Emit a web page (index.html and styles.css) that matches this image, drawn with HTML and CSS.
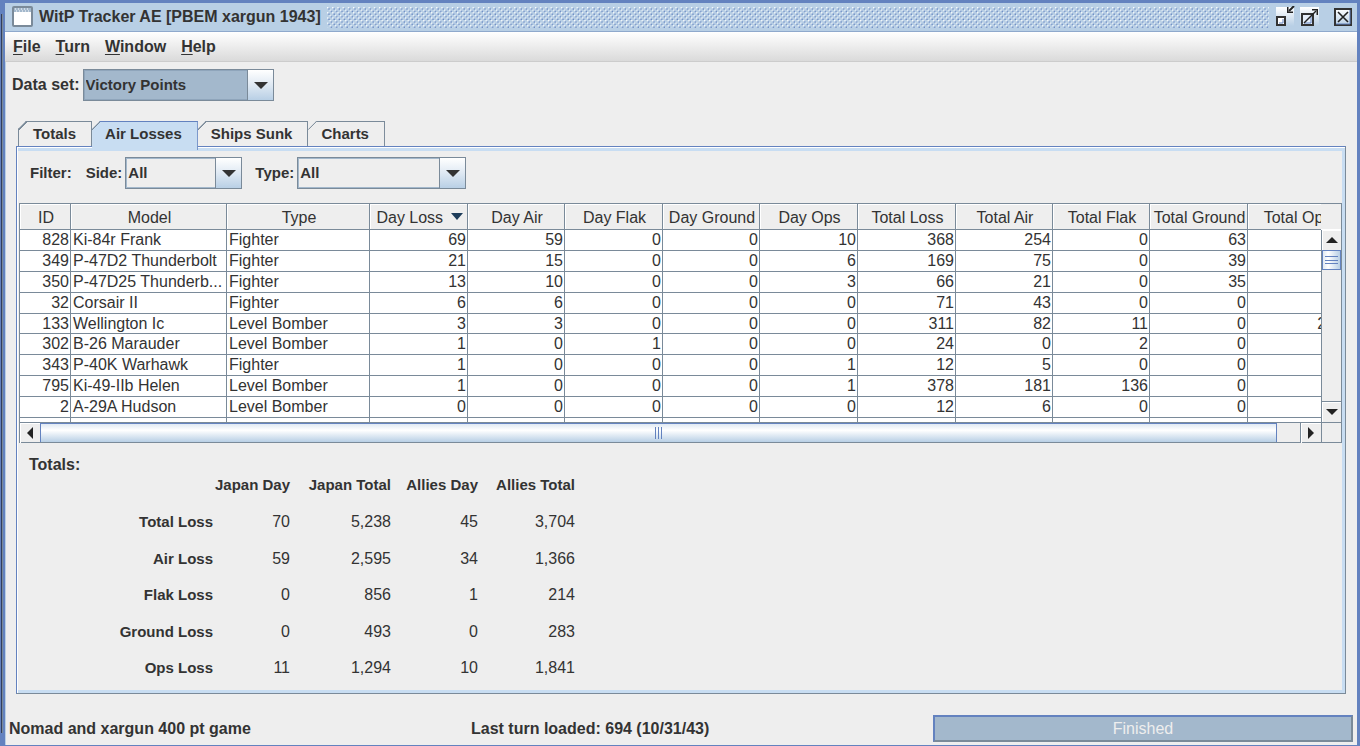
FILE: index.html
```
<!DOCTYPE html>
<html lang="en">
    <head>
        <meta charset="utf-8">
        <title>WitP Tracker AE</title>
        <link rel="stylesheet" href="styles.css">
    </head>
    <body>
        <div class="window">
            <header class="titlebar">
                <svg class="app-icon" width="22" height="22" viewBox="0 0 22 22">
                    <rect x="1" y="1" width="19" height="19" rx="1" fill="#fff" stroke="#7a8a99" stroke-width="2"/>
                    <path d="M2 2h17v4H2z" fill="#a3b8cc"/>
                    <path d="M3 3h15M4 5h15" stroke="#fff" stroke-dasharray="1 2"/>
                </svg>
                <h1>WitP Tracker AE [PBEM xargun 1943]</h1>
                <svg class="grip" height="21">
                    <defs>
                        <pattern id="bumps" width="4" height="4" patternUnits="userSpaceOnUse" patternTransform="scale(1.3)">
                            <path d="M0 0h1v1H0zM2 2h1v1H2z" fill="#fff"/>
                            <path d="M1 1h1v1H1zM3 3h1v1H3z" fill="#6382bf"/>
                        </pattern>
                    </defs>
                    <rect width="100%" height="21" fill="url(#bumps)"/>
                </svg>
                <button class="win-btn" aria-label="Minimize">
                    <svg width="20" height="22" viewBox="0 0 20 22">
                        <defs>
                            <linearGradient id="shine" x1="0" y1="0" x2="0" y2="1">
                                <stop offset="0" stop-color="#fff"/>
                                <stop offset="1" stop-color="#b8cfe5"/>
                            </linearGradient>
                        </defs>
                        <path d="M1 1h18v19H1z" fill="url(#shine)"/>
                        <rect x="2" y="11" width="8" height="8" fill="#fff" stroke="#333" stroke-width="2"/>
                        <path d="M4 17h4v-4" fill="none" stroke="#6382bf"/>
                        <path d="M19 0l-5 5" stroke="#222" stroke-width="2"/>
                        <path d="M12 1v6h6v-1.5h-4.500V1z" fill="#222"/>
                    </svg>
                </button>
                <button class="win-btn" aria-label="Maximize">
                    <svg width="20" height="22" viewBox="0 0 20 22">
                        <path d="M0 1h19v19H0z" fill="url(#shine)"/>
                        <rect x="2" y="8" width="11" height="11" fill="#e6effa" stroke="#333" stroke-width="2"/>
                        <path d="M4 17h7v-7" fill="none" stroke="#6382bf"/>
                        <path d="M4 17L16 5" stroke="#222" stroke-width="1.4"/>
                        <path d="M12 3h6v6h-1.500V4.500H12z" fill="#222"/>
                    </svg>
                </button>
                <button class="win-btn close" aria-label="Close">
                    <svg width="20" height="22" viewBox="0 0 20 22">
                        <rect x="2" y="3" width="16" height="16" fill="url(#shine)" stroke="#333" stroke-width="2"/>
                        <path d="M3 18h14V4" fill="none" stroke="#6382bf"/>
                        <path d="M5 6l10 10M15 6L5 16" stroke="#222" stroke-width="1.6"/>
                    </svg>
                </button>
            </header>

            <nav class="menubar">
                <button><u>F</u>ile</button>
                <button><u>T</u>urn</button>
                <button><u>W</u>indow</button>
                <button><u>H</u>elp</button>
            </nav>

            <div class="dataset">
                <label for="dataset">Data set:</label>
                <span class="combo focused combo-dataset">
                    <select id="dataset"><option>Victory Points</option></select>
                </span>
            </div>

            <div class="tabs" role="tablist">
                <button class="tab" role="tab">Totals</button>
                <button class="tab active" role="tab" aria-selected="true">Air Losses</button>
                <button class="tab" role="tab">Ships Sunk</button>
                <button class="tab" role="tab">Charts</button>
            </div>

            <main class="panel">
                <div class="filters">
                    <span class="filter-title">Filter:</span>
                    <label for="side">Side:</label>
                    <span class="combo combo-side">
                        <select id="side"><option>All</option></select>
                    </span>
                    <label for="type">Type:</label>
                    <span class="combo combo-type">
                        <select id="type"><option>All</option></select>
                    </span>
                </div>

                <div class="scrollpane">
                    <div class="viewport">
                        <table class="losses">
                            <colgroup>
                                <col class="c-id"><col class="c-model"><col class="c-type">
                                <col class="c-wide"><col class="c-num"><col class="c-wide"><col class="c-num"><col class="c-wide">
                                <col class="c-wide"><col class="c-num"><col class="c-num"><col class="c-wide"><col class="c-wide">
                            </colgroup>
                            <thead>
                                <tr><th>ID</th><th>Model</th><th>Type</th><th>Day Loss <svg width="12" height="7" viewBox="0 0 12 7"><path d="M0 0h12L6 7z" fill="#1d3c5a"/></svg></th><th>Day Air</th><th>Day Flak</th><th>Day Ground</th><th>Day Ops</th><th>Total Loss</th><th>Total Air</th><th>Total Flak</th><th>Total Ground</th><th>Total Ops</th></tr>
                            </thead>
                            <tbody>
                                <tr><td>828</td><td>Ki-84r Frank</td><td>Fighter</td><td>69</td><td>59</td><td>0</td><td>0</td><td>10</td><td>368</td><td>254</td><td>0</td><td>63</td><td></td></tr>
                                <tr><td>349</td><td>P-47D2 Thunderbolt</td><td>Fighter</td><td>21</td><td>15</td><td>0</td><td>0</td><td>6</td><td>169</td><td>75</td><td>0</td><td>39</td><td></td></tr>
                                <tr><td>350</td><td>P-47D25 Thunderb...</td><td>Fighter</td><td>13</td><td>10</td><td>0</td><td>0</td><td>3</td><td>66</td><td>21</td><td>0</td><td>35</td><td></td></tr>
                                <tr><td>32</td><td>Corsair II</td><td>Fighter</td><td>6</td><td>6</td><td>0</td><td>0</td><td>0</td><td>71</td><td>43</td><td>0</td><td>0</td><td></td></tr>
                                <tr><td>133</td><td>Wellington Ic</td><td>Level Bomber</td><td>3</td><td>3</td><td>0</td><td>0</td><td>0</td><td>311</td><td>82</td><td>11</td><td>0</td><td>218</td></tr>
                                <tr><td>302</td><td>B-26 Marauder</td><td>Level Bomber</td><td>1</td><td>0</td><td>1</td><td>0</td><td>0</td><td>24</td><td>0</td><td>2</td><td>0</td><td></td></tr>
                                <tr><td>343</td><td>P-40K Warhawk</td><td>Fighter</td><td>1</td><td>0</td><td>0</td><td>0</td><td>1</td><td>12</td><td>5</td><td>0</td><td>0</td><td></td></tr>
                                <tr><td>795</td><td>Ki-49-IIb Helen</td><td>Level Bomber</td><td>1</td><td>0</td><td>0</td><td>0</td><td>1</td><td>378</td><td>181</td><td>136</td><td>0</td><td></td></tr>
                                <tr><td>2</td><td>A-29A Hudson</td><td>Level Bomber</td><td>0</td><td>0</td><td>0</td><td>0</td><td>0</td><td>12</td><td>6</td><td>0</td><td>0</td><td></td></tr>
                                <tr><td></td><td></td><td></td><td></td><td></td><td></td><td></td><td></td><td></td><td></td><td></td><td></td><td></td></tr>
                            </tbody>
                        </table>
                    </div>
                    <div class="vscroll">
                        <div class="head-corner"></div>
                        <button class="arrow" aria-label="Scroll up"><svg width="12" height="6" viewBox="0 0 12 6"><path d="M0 6h12L6 0z" fill="#222"/></svg></button>
                        <div class="thumb-v"><svg width="13" height="10" viewBox="0 0 13 10"><path d="M0 1.5h13M0 5.5h13M0 8.5h13" stroke="#6382bf"/></svg></div>
                        <div class="track-v"></div>
                        <button class="arrow" aria-label="Scroll down"><svg width="12" height="6" viewBox="0 0 12 6"><path d="M0 0h12L6 6z" fill="#222"/></svg></button>
                    </div>
                    <div class="hscroll">
                        <button class="arrow" aria-label="Scroll left"><svg width="6" height="12" viewBox="0 0 6 12"><path d="M6 0v12L0 6z" fill="#222"/></svg></button>
                        <div class="thumb-h"><svg width="8" height="12" viewBox="0 0 8 12"><path d="M.5 0v12M3.5 0v12M6.5 0v12" stroke="#6382bf"/></svg></div>
                        <div class="track-h"></div>
                        <button class="arrow" aria-label="Scroll right"><svg width="6" height="12" viewBox="0 0 6 12"><path d="M0 0v12L6 6z" fill="#222"/></svg></button>
                    </div>
                    <div class="corner"></div>
                </div>

                <h2>Totals:</h2>
                <table class="totals">
                    <colgroup>
                        <col class="t-label"><col class="t-jday"><col class="t-jtotal"><col class="t-aday"><col class="t-atotal">
                    </colgroup>
                    <thead>
                        <tr><td></td><th>Japan Day</th><th>Japan Total</th><th>Allies Day</th><th>Allies Total</th></tr>
                    </thead>
                    <tbody>
                        <tr><th>Total Loss</th><td>70</td><td>5,238</td><td>45</td><td>3,704</td></tr>
                        <tr><th>Air Loss</th><td>59</td><td>2,595</td><td>34</td><td>1,366</td></tr>
                        <tr><th>Flak Loss</th><td>0</td><td>856</td><td>1</td><td>214</td></tr>
                        <tr><th>Ground Loss</th><td>0</td><td>493</td><td>0</td><td>283</td></tr>
                        <tr><th>Ops Loss</th><td>11</td><td>1,294</td><td>10</td><td>1,841</td></tr>
                    </tbody>
                </table>
            </main>

            <footer class="status">
                <span>Nomad and xargun 400 pt game</span>
                <span>Last turn loaded: 694 (10/31/43)</span>
                <div class="progress" role="progressbar" aria-valuenow="100">Finished</div>
            </footer>
        </div>
    </body>
</html>
```

FILE: styles.css
```
*{
    box-sizing:border-box;
    margin:0;
    padding:0;
}
body{
    font:bold 16px/20px "Liberation Sans", Arial, sans-serif;
    color:#333;
    background:linear-gradient(90deg, #333e5c 50%, #7a8a99 50%) 1px 14px / 2px calc(100vh - 27px) no-repeat #6382bf;
}
button, select{
    font:inherit;
    color:inherit;
    border:0;
    background:none;
}
.window{
    display:flex;
    flex-direction:column;
    min-height:100vh;
    margin-left:3px;
    border:solid #6382bf;
    border-width:3px 3px 1px 2px;
    background:#eee;
    box-shadow:inset 1px 0 #b8cfe5;
}

/* title bar */
.titlebar{
    display:flex;
    align-items:center;
    height:29px;
    padding:0 4px 0 7px;
    background:#b8cfe5;
    border-bottom:1px solid #8fa9cc;
}
.titlebar h1{
    font-size:16px;
    margin:0 6px 0 5px;
}
.grip{
    flex:1;
    min-width:0;
    margin-right:6px;
}
.win-btn{
    display:flex;
    width:20px;
    margin-right:5px;
}
.win-btn.close{
    margin:0 0 0 8px;
}

.menubar{
    display:flex;
    gap:15px;
    height:30px;
    padding:0 8px;
    background:linear-gradient(#fff, #dadada);
    border-bottom:1px solid #ccc;
}
.menubar u{
    text-underline-offset:2px;
}

/* combo boxes */
.dataset{
    display:flex;
    align-items:center;
    padding:7px 7px 0;
}
.combo{
    position:relative;
    display:flex;
    height:32px;
    border:1px solid #7a8a99;
    box-shadow:inset 0 0 0 1px #a3b8cc;
    font-size:15px;
}
.combo select{
    width:100%;
    padding:0 26px 0 2px;
    appearance:none;
}
.combo::before{
    content:"";
    position:absolute;
    top:0;
    right:0;
    bottom:0;
    width:25px;
    border-left:1px solid #7a8a99;
    background:linear-gradient(#fff, #dfe9f3 50%, #b8cfe5);
    pointer-events:none;
}
.combo::after{
    content:"";
    position:absolute;
    top:12px;
    right:5px;
    border:solid transparent;
    border-width:7px 7px 0;
    border-top-color:#333;
    pointer-events:none;
}
.combo.focused{
    background:#a3b8cc;
    box-shadow:inset 0 0 0 1px #8fa5bb;
}
.combo-dataset{
    width:191px;
    margin-left:3px;
}
.combo-side{
    width:117px;
    margin:0 13px 0 3px;
}
.combo-type{
    width:169px;
    margin-left:3px;
}

/* tabs */
.tabs{
    display:flex;
    margin:20px 13px 0;
    font-size:15px;
}
.tab{
    position:relative;
    height:25px;
    padding:0 15px 0 13px;
    border:solid #7a8a99;
    border-width:1px 1px 0 0;
    clip-path:polygon(0 8px, 8px 0, 100% 0, 100% 100%, 0 100%);
}
.tab:first-child{
    padding-left:14px;
    border-left-width:1px;
}
.tab::before{
    content:"";
    position:absolute;
    top:-1px;
    left:-1px;
    width:9px;
    height:9px;
    background:linear-gradient(135deg, transparent 44%, #7a8a99 44%, #7a8a99 56%, transparent 56%);
}
.tab.active{
    height:29px;
    margin-bottom:-4px;
    padding-bottom:4px;
    background:#c8ddf2;
    border-color:#6382bf;
    z-index:1;
}

.panel{
    flex:1;
    margin:0 11px;
    padding:10px 1px 4px 0;
    border:1px solid #7a8a99;
    border-top-color:#6382bf;
    border-left-color:#6382bf;
    box-shadow:inset 1px 1px #fff, inset -3px -3px #c8ddf2, inset 0 4px #c8ddf2;
}
.filters{
    display:flex;
    align-items:center;
    margin:0 13px 14px;
    font-size:15px;
}
.filter-title{
    margin-right:14px;
}

/* table with its scroll bars */
.scrollpane{
    display:grid;
    grid-template-columns:minmax(0, 1fr) 20px;
    grid-template-rows:218px 20px;
    margin:0 2px;
    border:1px solid #7a8a99;
}
.viewport{
    overflow:hidden;
    background:#fff;
}
.losses{
    width:1272px;
    table-layout:fixed;
    border-collapse:separate;
    border-spacing:0;
    font-weight:normal;
}
.c-id{
    width:51px;
}
.c-model{
    width:156px;
}
.c-type{
    width:143px;
}
.c-wide{
    width:98px;
}
.c-num{
    width:97px;
}
.losses th, .losses td{
    border:solid #7a8a99;
    border-width:0 1px 1px 0;
    line-height:18px;
    white-space:nowrap;
}
.losses th{
    height:26px;
    padding:3px 0 0 2px;
    font-weight:normal;
    background:#eee;
    box-shadow:inset 1px 1px #fff;
}
.losses th svg{
    margin:0 0 3px 3px;
}
.losses td{
    height:21px;
    padding:0 1px 0 2px;
    text-align:right;
}
.losses tr:nth-child(5n) td{
    height:20px;
}
.losses td:nth-child(2), .losses td:nth-child(3){
    text-align:left;
}
.vscroll, .hscroll{
    display:flex;
    background:#eee;
}
.vscroll{
    flex-direction:column;
    border-left:1px solid #7a8a99;
}
.arrow{
    display:flex;
    align-items:center;
    justify-content:center;
    flex:none;
    width:20px;
    height:20px;
    box-shadow:inset 1px 1px #fff;
}
.vscroll .arrow{
    width:100%;
}
.head-corner{
    height:26px;
    margin-left:-1px;
    background:#eee;
    border-bottom:1px solid #fff;
}
.thumb-v, .thumb-h{
    display:flex;
    align-items:center;
    justify-content:center;
    border:1px solid #6382bf;
}
.thumb-v{
    height:20px;
    background:linear-gradient(90deg, #dfe9f3, #fff 30%, #b8cfe5);
}
.track-v{
    flex:1;
    border-bottom:1px solid #7a8a99;
}
.hscroll{
    border-top:1px solid #7a8a99;
}
.thumb-h{
    flex:1;
    border-bottom:0;
    background:linear-gradient(#dfe9f3, #fff 35%, #b8cfe5);
}
.track-h{
    width:24px;
    border-right:1px solid #7a8a99;
}
.corner{
    border:solid #7a8a99;
    border-width:1px 0 0 1px;
}

/* totals */
.panel h2{
    margin:12px 12px 0;
    font-size:16px;
}
.totals{
    table-layout:fixed;
    width:462px;
    margin-left:96px;
    border-spacing:0;
    text-align:right;
    white-space:nowrap;
}
.t-label{
    width:100px;
}
.t-jday{
    width:77px;
}
.t-jtotal{
    width:101px;
}
.t-aday{
    width:87px;
}
.t-atotal{
    width:97px;
}
.totals thead{
    vertical-align:top;
}
.totals thead tr{
    height:29px;
}
.totals tbody tr{
    height:36px;
}
.totals tbody tr:nth-child(even){
    height:37px;
}
.totals th{
    font-size:15px;
}
.totals td{
    font-weight:normal;
}

.status{
    display:grid;
    grid-template-columns:1fr 1fr 420px;
    align-items:center;
    padding:21px 4px 3px;
}
.progress{
    height:27px;
    line-height:24px;
    border:2px solid #7a8a99;
    border-top-color:#6382bf;
    border-left-color:#6382bf;
    background:#a3b8cc;
    color:#eee;
    text-align:center;
    font-weight:normal;
}
```
